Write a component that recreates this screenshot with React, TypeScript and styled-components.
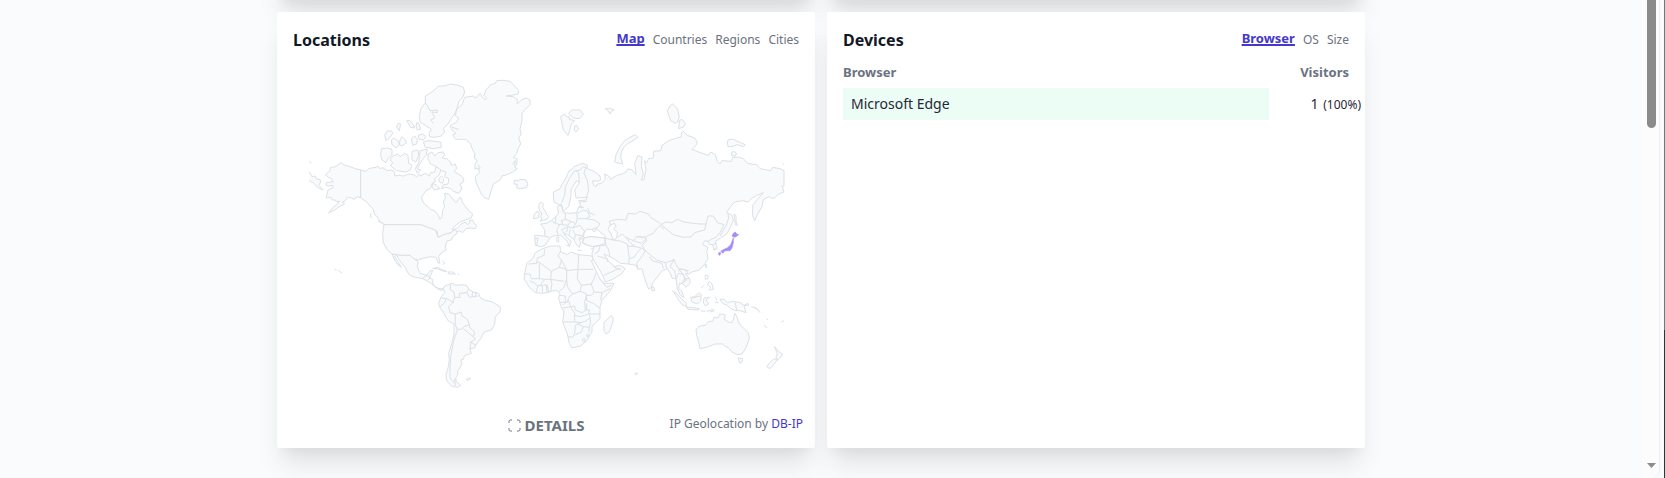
import React from "react";
import styled, { createGlobalStyle } from "styled-components";

const GlobalStyle = createGlobalStyle`
  *, *::before, *::after { box-sizing: border-box; }
  body {
    margin: 0;
    background: #f9fafb;
    color: #1f2937;
    font-family: "Noto Sans", "Open Sans", sans-serif;
    font-size: 14px;
    line-height: 20px;
  }
  button { font: inherit; color: inherit; background: none; border: 0; padding: 0; cursor: pointer; }
`;

const Viewport = styled.div`
  display: flex;
  height: 100vh;
  overflow: hidden;
  background: #fafbfc;
`;

const Page = styled.main`
  flex: 1;
  min-width: 0;
  overflow: hidden;
`;

const Dashboard = styled.div`
  display: grid;
  grid-template-columns: 1fr 1fr;
  gap: 12px;
  max-width: 1088px;
  margin: 0 auto;
`;

const cardShadow = `0 20px 25px -5px rgba(0, 0, 0, 0.1), 0 10px 10px -5px rgba(0, 0, 0, 0.04)`;

const ScrolledCard = styled.div`
  height: 60px;
  margin-top: -60px;
  background: #fff;
  border-radius: 2px;
  box-shadow: ${cardShadow};
`;

const Card = styled.section`
  display: flex;
  flex-direction: column;
  min-height: 436px;
  padding: 16px 16px 12px;
  background: #fff;
  border-radius: 2px;
  box-shadow: ${cardShadow};
`;

const CardHeader = styled.header`
  display: flex;
  justify-content: space-between;
  height: 24px;
`;

const Title = styled.h3`
  margin: 0;
  font-size: 16px;
  line-height: 24px;
  font-weight: 700;
  color: #111827;
`;

const Tabs = styled.nav`
  display: flex;
  align-items: flex-start;
  gap: 8px;
`;

const Tab = styled.button<{ $active?: boolean }>`
  && {
    font-size: ${(p) => (p.$active ? 13 : 12)}px;
    line-height: ${(p) => (p.$active ? 20 : 24)}px;
    font-weight: ${(p) => (p.$active ? 700 : 400)};
    color: ${(p) => (p.$active ? "#4338ca" : "#6b7280")};
    text-decoration: ${(p) => (p.$active ? "underline 2px" : "none")};
    text-underline-offset: 1px;
    text-decoration-skip-ink: none;
  }
`;

const MapDrawing = styled.svg`
  display: block;
  width: 100%;
  height: auto;
  margin-top: 16px;
  fill: #f8fafc;
  stroke: #dae1e7;
  stroke-width: 3;
  stroke-linejoin: round;
  .line { fill: none; }
  .water { fill: #fff; }
  .selected { fill: #a78bfa; stroke: #a394f0; stroke-width: 2; }
`;

const CardFooter = styled.footer`
  display: grid;
  grid-template-columns: 1fr auto 1fr;
  align-items: start;
  margin: auto -4px 0;
`;

const DetailsButton = styled.button`
  && {
    grid-column: 2;
    display: flex;
    align-items: center;
    gap: 4px;
    font-size: 15px;
    line-height: 22px;
    font-weight: 700;
    color: #6b7280;
  }
`;

const Attribution = styled.span`
  justify-self: end;
  font-size: 12px;
  line-height: 20px;
  color: #6b7280;
  white-space: nowrap;
`;

const Link = styled.a`
  color: #4338ca;
  text-decoration: none;
`;

const Report = styled.table`
  width: 100%;
  margin-top: 8px;
  border-collapse: collapse;
  table-layout: fixed;
`;

const HeadCell = styled.th<{ $end?: boolean }>`
  width: ${(p) => (p.$end ? "80px" : "auto")};
  height: 28px;
  padding: 0 0 4px;
  font-size: 13px;
  line-height: 20px;
  text-align: ${(p) => (p.$end ? "right" : "left")};
  color: #6b7280;
`;

const NameCell = styled.td`
  height: 32px;
  padding: 0 8px;
  background: #ecfdf5;
`;

const ValueCell = styled.td`
  padding: 0;
  white-space: nowrap;
`;

const Value = styled.div`
  margin-right: -12px;
  text-align: right;
`;

const Percent = styled.span`
  margin-left: 1px;
  font-size: 12px;
`;

const Scrollbar = styled.div`
  display: flex;
  flex-direction: column;
  align-items: center;
  justify-content: space-between;
  width: 18px;
  margin-right: 4px;
  padding: 0 3px 10px 5px;
  background: #fcfcfc;
  border-right: 1px solid #eceef0;
  border-bottom-right-radius: 8px;
`;

const Thumb = styled.div`
  width: 9px;
  height: 128px;
  background: #8b8b8b;
  border-radius: 0 0 5px 5px;
`;

const WindowEdge = styled.div`
  width: 1px;
  background: linear-gradient(#777 330px, #333 330px);
`;

const NorthAmerica = () => (
  <g>
    {/* Alaska, Canada and the northern islands */}
    <path d="M182 300L166 296 150 290 134 286 122 278 108 290 92 292 90 302 76 314 84 322 94 326 100 335 80 338 77 344 84 348 98 346 100 352 84 360 78 384 92 382 96 390 106 390 110 396 118 393 112 402 100 412 86 428 104 420 114 412 122 408 134 402 128 396 136 392 142 382 150 382 162 388 172 380 182 383Z" />
    <path d="M182 300L198 304 206 296 214 294 228 292 234 288 240 296 248 293 262 302 274 300 284 306 284 318 296 316 310 318 326 312 340 314 350 320 358 312 362 318 376 310 388 318 392 308 404 306 408 290 424 296 418 314 404 326 406 336 396 340 392 354 376 364 364 382 370 398 392 418 406 424 414 434 420 448 426 440 428 422 434 410 430 396 436 384 434 370 446 372 456 384 468 398 476 386 482 382 488 398 500 414 508 424 518 432 514 444 496 450 480 456 462 470 456 480 470 476 484 462 496 456 502 464 510 458 508 452 518 450 522 460 530 466 526 476 512 474 498 476 488 488 478 482 468 486 458 486 446 490 414 502 412 484 384 472 362 464 252 464 240 456 230 438 224 434 220 418 210 408 200 396 182 383Z" />
    <path d="M213 430L211 440 217 444M234 454L250 460 252 466M28 274L34 280M28 306L36 320 46 318 50 328 60 328 62 336 56 346 70 360 52 352 40 338 28 332M398 340L410 346 420 356 402 360 396 350Z" />
    <path d="M244 236L262 234 276 238 276 254 264 266 258 278 246 270 242 256ZM278 258L294 252 300 260 314 250 324 256 326 280 336 286 330 300 318 306 290 302 272 288 278 278 270 270ZM336 244L354 240 356 256 348 276 336 270ZM360 242L382 238 378 256 368 268 358 284 352 296 362 300 352 310 346 296 356 278ZM254 196L262 182 276 184 278 190 268 204 258 212ZM274 210L280 204 294 212 298 224 288 234 276 224ZM300 210L306 200 314 208 320 218 306 228 298 224ZM290 172L294 160 302 162 298 182ZM320 152L330 152 340 164 344 174 332 172ZM350 158L356 160 362 178 352 180 348 168ZM334 206L344 198 352 208 350 222 338 226ZM354 196L368 192 378 200 370 210 358 208ZM370 216L386 212 422 216 424 232 400 236 376 232Z" />
    <path d="M376 78L386 72 404 60 416 48 432 48 452 42 474 46 490 52 494 66 488 82 476 96 472 112 466 128 454 146 444 162 430 176 434 186 424 198 404 202 388 200 388 188 394 178 378 168 360 156 358 140 362 118 376 98ZM376 98L390 122 412 120 412 128 396 126 404 144 392 150 400 160" />
    <path d="M384 252L396 246 404 258 414 248 430 246 434 256 426 264 440 266 452 276 454 286 466 282 470 296 462 304 472 310 484 318 492 326 488 338 480 342 486 356 476 370 460 364 452 356 438 352 424 356 430 344 444 342 446 326 434 320 438 306 424 302 410 290 392 282 384 268ZM416 326L424 318 432 326 428 340 418 336Z" />
    {/* Greenland and Iceland */}
    <path d="M450 168L470 156 476 144 466 138 470 118 486 104 494 82 520 78 528 84 540 70 550 84 556 90 560 84 552 76 558 60 572 44 586 40 590 32 608 31 630 34 642 46 656 62 654 72 634 76 618 78 640 80 652 88 652 102 664 90 680 84 690 90 690 104 676 118 666 130 666 152 660 178 664 194 656 202 662 222 654 236 650 250 640 262 652 268 650 284 644 292 652 296 638 306 622 314 606 318 600 330 580 342 574 362 566 388 552 382 544 372 536 354 528 336 526 320 538 308 536 294 524 296 526 280 532 272 524 266 524 250 518 240 512 222 498 208 478 208 466 208 458 194 468 190 456 180ZM644 330L656 332 660 328 678 330 684 342 680 352 664 356 650 354 652 344 642 342Z" />
    <path className="line" d="M636 284L646 272 644 288M534 284L540 292 534 300M456 172L476 178" />
    {/* Contiguous states, Mexico and Central America */}
    <path d="M252 464L362 464 384 472 406 480 414 502 436 492 450 490 466 478 472 490 458 500 454 510 442 512 436 528 438 540 424 548 416 560 420 580 414 578 408 562 392 560 372 564 356 570 344 568 330 556 300 556 276 552 262 540 250 518 248 490Z" />
    <path d="M276 552L300 556 330 556 344 568 354 574 352 590 360 610 380 616 390 602 398 602 392 616 388 624 398 628 398 642 408 652 420 656 432 656 426 662 412 656 398 644 384 634 368 626 346 622 330 616 322 606 316 592 302 576 290 556 284 560 294 576 304 592 290 580 280 562Z" />
    <path className="line" d="M368 626L376 618 390 618M384 630L392 622M398 596L412 592 428 600 440 604 432 604 412 596ZM444 606L458 606 466 612 446 612ZM428 572L434 580 428 584M472 612L478 614M104 598L110 600M114 600L126 610" />
  </g>
);

const SouthAmerica = () => (
  <g transform="translate(0 420)">
    <path d="M430 236L434 228 450 222 458 220 466 226 486 224 500 226 506 238 520 246 536 250 540 262 552 270 578 276 602 292 600 306 586 320 584 344 574 360 552 366 542 386 528 404 524 414 510 416 514 430 494 436 490 448 482 450 486 462 478 476 472 486 474 494 468 502 468 514 482 526 472 532 454 528 440 512 438 494 444 474 448 450 446 430 456 398 462 372 462 342 444 332 430 306 418 290 416 278 424 260 434 248Z" />
    <path className="line" d="M452 224L450 238 462 246 464 262 458 278 446 290 450 308 466 312 466 344 472 360 460 396 452 440 450 480 450 504 464 520M424 264L440 266 432 280 420 290M440 266L462 278M464 262L480 262 478 250 500 248 506 238M500 248L508 262 534 258M518 246L516 260M528 246L526 260M466 312L484 306 486 318 502 328 508 344 492 350 484 358 472 358M508 344L510 354 524 366 520 380 490 356M520 380L526 388 512 396 510 416M512 396L528 406M464 506L466 528M498 508L512 504 504 512Z" />
  </g>
);

const Eurasia = () => (
  <g>
    <path d="M762 396L760 366 778 358 786 344 800 320 806 304 816 298 822 290 836 284 848 280 862 286 862 296 882 304 900 318 902 330 890 334 878 332 880 344 888 350 892 342 904 340 916 328 914 312 926 318 932 328 950 316 966 312 978 306 984 296 996 300 1008 314 1004 280 1014 256 1026 262 1024 290 1030 312 1024 330 1032 328 1038 300 1034 272 1040 278 1046 266 1060 264 1060 244 1082 242 1086 226 1106 212 1130 204 1144 200 1144 188 1150 184 1162 196 1184 204 1192 216 1188 226 1176 238 1200 248 1226 256 1232 246 1246 254 1252 274 1260 282 1266 272 1294 274 1298 262 1316 262 1330 266 1342 280 1370 284 1380 296 1412 302 1418 292 1440 296 1452 302V348L1446 348 1452 366 1436 372 1426 382 1416 386 1408 380 1390 388 1386 410 1374 430 1364 452 1358 438 1358 406 1374 386 1390 368 1370 376 1356 384 1344 396 1328 392 1304 396 1290 412 1280 428 1296 436 1300 452 1292 470 1282 490 1262 504 1246 514 1252 536 1242 540 1238 524 1228 524 1224 514 1214 512 1208 524 1224 532 1220 544 1224 566 1210 588 1196 600 1176 606 1166 612 1156 610 1170 628 1170 640 1158 652 1150 642 1138 640 1136 656 1146 664 1152 684 1140 674 1132 656 1128 626 1116 624 1110 608 1102 596 1084 604 1070 624 1058 638 1054 652 1046 658 1034 626 1026 596 1014 598 1008 586 986 582 962 580 944 568 930 560 912 552 926 574 944 590 960 586 976 596 964 612 938 628 916 636 908 616 892 588 878 566 876 550 882 530 864 526 848 520 850 506 838 508 842 518 838 532 828 522 820 506 802 494 790 488 802 504 814 514 808 530 802 514 782 496 770 496 754 500 746 510 736 526 724 530 706 526 704 496 734 498 734 480 722 462 738 460 754 452 768 438 776 430 772 410 784 406 790 428 808 430 830 428 836 410 846 414 836 392 858 390 862 382 828 384 824 360 838 338 830 332 814 356 812 384 806 410 790 424 784 404 776 404Z" />
    <path className="water" d="M852 504L850 490 860 478 874 478 884 486 888 476 898 484 914 496 916 504 892 502 870 500ZM932 464L944 460 948 470 940 476 952 486 950 504 940 510 932 490 924 478Z" />
    {/* Borders of northern and central Europe */}
    <path className="line" d="M784 400L794 376 796 350 808 326 822 304 840 300 850 290 862 296M838 338L836 310 828 300M858 290L852 310 862 332 866 362 858 384M768 438L766 456 778 466 770 480 774 494M796 430L796 448 784 452 788 462 774 464M796 448L812 454 804 466 784 464M830 430L832 446 828 460 812 454M832 430L850 420 862 424 870 440 856 446 832 446M828 460L818 474 804 470 784 480 792 488M856 446L884 450 900 462 892 472 876 478M818 474L840 466 854 484 850 498 826 494 818 480M826 494L824 508M810 478L808 496M804 470L800 486M850 498L836 506M706 506L714 504 710 526M734 498L748 502M754 452L768 462M840 396L860 394M836 410L852 412M862 414L870 430 884 434" />
    {/* Anatolia */}
    <path d="M848 518L852 504 870 500 892 502 914 504 916 520 900 526 880 530 864 526Z" />
    {/* Middle East */}
    <path className="line" d="M880 530L900 526 918 526 926 540 930 560M918 526L914 504 930 508 940 510 964 514 982 522 986 550 988 566 986 582M900 526L896 544 884 552M892 558L920 566 924 576M912 616L930 608 960 594M940 590L962 600M982 528L1006 530 1024 534 1010 550 1002 562 988 566M1024 534L1036 542 1028 556 1010 580 1014 598" />
    {/* Kazakhstan, China and Mongolia */}
    <path className="line" d="M932 468L928 454 952 448 978 450 984 430 1006 432 1020 424 1046 432 1052 442 1078 458 1084 464 1070 476 1060 490 1034 502 1010 500 1000 512 978 502 966 492 952 502M1000 512L1024 520 1040 506M978 502L988 516 1006 530M1036 542L1050 554 1070 570 1096 578 1110 574 1122 568 1126 580 1136 596 1148 598 1166 602M1084 464L1096 456 1116 458 1132 448 1152 456 1178 460 1200 462 1218 462 1214 480 1184 488 1174 500 1150 502 1120 494 1100 478 1084 464M1218 462L1224 438 1240 438 1252 458 1272 464 1260 488 1246 504M1010 500L1034 502 1040 512 1026 526 1036 542M1082 470L1092 478M1050 560L1056 572 1086 580 1090 596M1096 578L1100 594M1128 626L1136 610 1150 612 1156 632 1148 640M1122 568L1110 590 1124 602 1128 626M1136 596L1148 612 1160 632M1224 514L1238 506 1246 504M1236 524L1250 520" />
    {/* Arctic islands */}
    <path d="M782 140L794 132 800 140 810 142 808 148 824 152 814 162 810 178 804 196 790 180ZM806 130L816 120 840 120 850 132 838 146 820 144ZM824 168L830 166 836 178 828 186 822 180ZM916 116L932 116 942 120 934 124 930 132 924 122ZM944 276L948 254 960 230 974 212 990 202 1006 194 1014 202 1002 210 984 220 972 232 964 246 962 262 968 282 956 280ZM1102 122L1110 108 1118 102 1132 116 1138 142 1132 156 1126 160 1112 152ZM1138 152L1146 148 1156 160 1152 170 1136 176ZM1282 216L1286 208 1300 208 1318 216 1336 224 1330 230 1312 224 1296 230 1284 230ZM1294 248L1302 244 1310 250 1306 258 1296 258ZM1448 280L1452 284" />
    {/* British Isles */}
    <path d="M718 400L724 396 730 402 728 412 734 420 740 434 746 440 740 448 720 454 726 444 720 440 726 432 720 424 716 412ZM706 428L714 424 718 432 714 444 700 446 702 436Z" />
    <path className="line" d="M770 502L776 500 776 516 770 514ZM798 526L808 526M832 540L846 542M872 538L880 534" />
  </g>
);

const Africa = () => (
  <g transform="translate(630 420)">
    <path d="M98 116L122 108 150 108 152 126 172 134 182 126 206 134 228 136 246 138 250 150 244 152 258 182 270 208 284 220 312 220 300 244 276 270 270 290 270 326 246 348 246 366 240 374 232 390 212 408 186 414 178 400 172 372 158 336 162 306 152 286 146 264 150 250 138 240 120 246 98 250 76 248 58 232 42 206 46 180 50 160 68 146 76 128Z" />
    <path className="line" d="M104 118L102 136 82 144 80 160 56 162M80 158L86 156 124 184 148 172 154 150 144 138 150 126M154 150L166 172 170 182 204 178 206 134M206 178H250M148 172L170 178 170 206 162 232 148 244M124 184L122 208 162 214M204 178L202 206 214 226 244 222 252 206 258 188M170 206L172 230 188 252 210 244 214 226M88 160L88 206 64 206 60 192 44 192M88 206L104 208 122 208 126 222 122 244M60 212L74 220 84 228 78 246M84 228L96 226 98 248M98 226L108 224 112 246M112 224L116 246M104 208L90 226M244 222L252 246 276 248 300 236M276 248L272 270M252 246L244 256 230 256 230 272 250 280 268 294M210 244L230 252 224 276 226 302 216 308 196 300 194 288 182 290 176 272 160 284M188 252L176 262 172 278M150 256L166 258 166 276 150 278M160 294L182 290 194 310 194 336 160 336M194 316L210 320 236 312 238 300 228 300M236 312L250 312 270 312M194 336L212 338 226 334 240 324 238 314M212 338L204 342 196 346 194 370 188 382 174 380M204 342L220 350 214 366 196 374M220 350L238 352 242 336 240 324M238 352L236 368M216 390L222 384 226 390 222 396ZM230 374L236 374 236 380 230 380ZM230 280L230 300M270 206L290 232 304 226" />
    <path d="M282 336L290 330 304 316 310 326 306 344 298 366 288 372 282 360ZM424 230L432 232 434 242 426 242Z" />
  </g>
);

const Oceania = () => (
  <g transform="translate(1020 420)">
    <path d="M168 358L180 348 196 346 206 334 218 334 222 322 234 324 240 312 254 314 256 318 252 328 266 336 276 338 282 322 284 310 290 318 294 332 300 344 312 356 324 368 328 384 322 404 314 420 306 432 292 434 276 426 264 412 256 410 248 402 226 402 206 410 190 414 180 416 176 396 170 376ZM294 444L308 446 306 456 300 460Z" />
    {/* New Zealand and the Pacific islands */}
    <path d="M404 410L412 420 418 426 428 432 422 442 412 450 408 440 412 432ZM402 446L412 450 402 462 390 476 380 470 388 460Z" />
    <path className="line" d="M372 346L382 354M380 326L384 330M424 336L432 332M334 290L350 296 360 308M344 292L358 302" />
    {/* Indonesia, the Philippines and Papua */}
    <path d="M98 242L112 252 126 268 138 278 140 290 126 284 112 264ZM140 292L156 292 178 296 176 300 144 298ZM152 262L164 260 178 248 184 254 182 272 172 282 156 276ZM192 264L208 262 198 270 206 282 196 288 190 278ZM240 268L252 268 262 278 278 274 300 278 312 286 318 308 300 302 286 302 272 296 262 286 248 280ZM312 286L324 280 326 286Z" />
    <path className="line" d="M182 302L196 304M200 304L222 298M210 306L224 302M226 260L230 270M224 276L236 278M286 278L290 302M196 196L204 196 204 206 196 208ZM208 214L216 222 220 238 208 240 212 230 202 224ZM184 234L192 226M198 162L200 174 196 170ZM156 264L180 258M114 184L122 178 132 178 144 188M126 222L134 206 148 206M264 12L266 24 258 48 240 78M282 12L288 16 288 34 292 46 286 44 284 28ZM220 118L226 116" />
    <path className="selected" d="M280 70L286 66 290 72 296 74 288 80 282 82 276 78ZM280 84L280 98 276 114 270 122 258 122 246 126 242 124 252 118 262 114 272 104 276 94ZM236 128L242 128 240 136 236 134ZM246 126L252 126 248 130Z" />
  </g>
);

const WorldMap = () => (
  <MapDrawing viewBox="-21 -6 1518 996" role="img" aria-label="Visitors by country">
    <NorthAmerica />
    <SouthAmerica />
    <Eurasia />
    <Africa />
    <Oceania />
    <path d="M1006 909L1012 909 1010 914 1006 914Z" />
  </MapDrawing>
);

const ExpandIcon = () => (
  <svg width="13" height="13" viewBox="0 0 13 13" fill="none" stroke="#6b7280" aria-hidden="true">
    <path d="M4 1H2.5Q1 1 1 2.5V4M9 1H10.500Q12 1 12 2.500V4M12 9V10.500Q12 12 10.500 12H9M4 12H2.500Q1 12 1 10.500V9" />
  </svg>
);

const TabList = ({ items }: { items: string[] }) => (
  <Tabs>
    {items.map((item, i) => (
      <Tab key={item} type="button" $active={i === 0}>
        {item}
      </Tab>
    ))}
  </Tabs>
);

export default function App() {
  return (
    <>
      <GlobalStyle />
      <Viewport>
        <Page>
          <Dashboard>
            <ScrolledCard />
            <ScrolledCard />
            <Card>
              <CardHeader>
                <Title>Locations</Title>
                <TabList items={["Map", "Countries", "Regions", "Cities"]} />
              </CardHeader>
              <WorldMap />
              <CardFooter>
                <DetailsButton type="button">
                  <ExpandIcon />
                  DETAILS
                </DetailsButton>
                <Attribution>
                  IP Geolocation by <Link href="#db-ip">DB-IP</Link>
                </Attribution>
              </CardFooter>
            </Card>
            <Card>
              <CardHeader>
                <Title>Devices</Title>
                <TabList items={["Browser", "OS", "Size"]} />
              </CardHeader>
              <Report>
                <thead>
                  <tr>
                    <HeadCell>Browser</HeadCell>
                    <HeadCell $end>Visitors</HeadCell>
                  </tr>
                </thead>
                <tbody>
                  <tr>
                    <NameCell>Microsoft Edge</NameCell>
                    <ValueCell>
                      <Value>
                        1 <Percent>(100%)</Percent>
                      </Value>
                    </ValueCell>
                  </tr>
                </tbody>
              </Report>
            </Card>
          </Dashboard>
        </Page>
        <Scrollbar aria-hidden="true">
          <Thumb />
          <svg width="9" height="5" viewBox="0 0 9 5">
            <path d="M0 0H9L4.500 5Z" fill="#8b8b8b" />
          </svg>
        </Scrollbar>
        <WindowEdge />
      </Viewport>
    </>
  );
}
